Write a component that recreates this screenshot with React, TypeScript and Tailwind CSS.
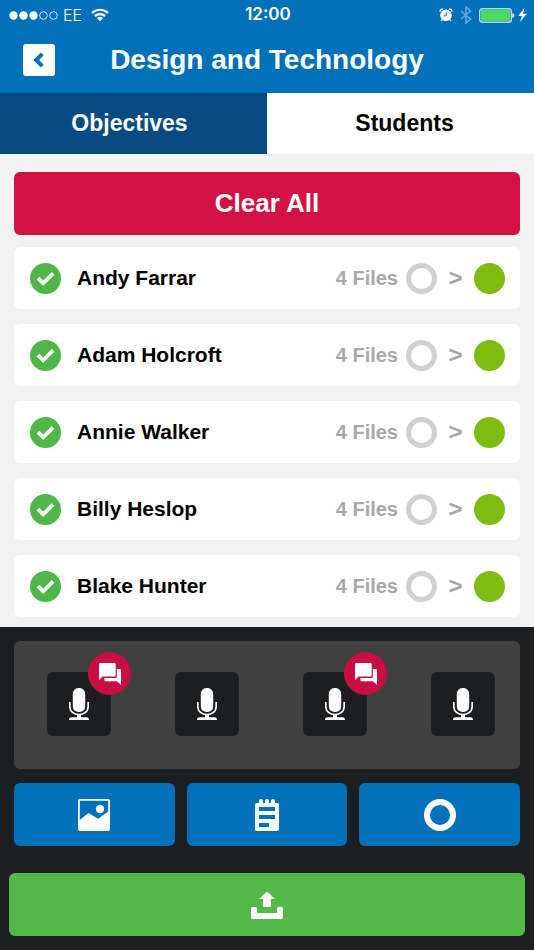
import { useState } from "react";

const STUDENTS = [
  { name: "Andy Farrar", files: 4 },
  { name: "Adam Holcroft", files: 4 },
  { name: "Annie Walker", files: 4 },
  { name: "Billy Heslop", files: 4 },
  { name: "Blake Hunter", files: 4 },
];

const RECORDINGS = [
  { id: 1, hasComments: true },
  { id: 2, hasComments: false },
  { id: 3, hasComments: true },
  { id: 4, hasComments: false },
];

const TABS = [
  { label: "Objectives", spacing: "pr-2" },
  { label: "Students", spacing: "pl-2" },
];

function SignalDots() {
  return (
    <svg className="w-[49px] h-[9px]" viewBox="0 0 49 9" aria-hidden="true">
      <circle cx="4.5" cy="4.5" r="4.2" fill="#fff" />
      <circle cx="14.5" cy="4.5" r="4.2" fill="#fff" />
      <circle cx="24.5" cy="4.5" r="4.2" fill="#fff" />
      <circle cx="34.5" cy="4.5" r="3.8" fill="none" stroke="#fff" strokeWidth="0.8" />
      <circle cx="44.5" cy="4.5" r="3.8" fill="none" stroke="#fff" strokeWidth="0.8" />
    </svg>
  );
}

function WifiIcon() {
  return (
    <svg className="w-[18px] h-[14px]" viewBox="0 0 18 14" fill="none" stroke="#fff" aria-hidden="true">
      <path d="M1 5 A11.5 11.5 0 0 1 17 5" strokeWidth="2.2" />
      <path d="M3.9 8.1 A7.4 7.4 0 0 1 14.1 8.1" strokeWidth="2.2" />
      <path d="M9 13.2 L5.9 10.1 A4.4 4.4 0 0 1 12.1 10.1 Z" fill="#fff" stroke="none" />
    </svg>
  );
}

function AlarmIcon() {
  return (
    <svg className="w-[14px] h-[14px]" viewBox="0 0 14 14" aria-hidden="true">
      <circle cx="7" cy="7.3" r="5.8" fill="#fff" />
      <path d="M0.9 3.6 A3 3 0 0 1 3.8 1 M13.1 3.6 A3 3 0 0 0 10.2 1" stroke="#fff" strokeWidth="1.3" fill="none" />
      <path d="M3 11.5 L2.1 13 M11 11.5 L11.9 13" stroke="#fff" strokeWidth="1.2" />
      <path d="M7.3 4 V7.8 H4.4" stroke="#0070ba" strokeWidth="1" fill="none" />
    </svg>
  );
}

function BluetoothIcon() {
  return (
    <svg className="w-[12px] h-[18px]" viewBox="0 0 12 18" fill="none" stroke="#62a9dc" strokeWidth="1.6" aria-hidden="true">
      <path d="M1 5 L10.5 13 L6 17 V1 L10.5 5 L1 13" />
    </svg>
  );
}

function BatteryIcon() {
  return (
    <svg className="w-[36px] h-[15px]" viewBox="0 0 36 15" aria-hidden="true">
      <rect x="0.7" y="0.7" width="31.6" height="13.6" rx="2.5" fill="none" stroke="#b5d5ee" strokeWidth="1.4" />
      <rect x="1.8" y="1.8" width="29.4" height="11.4" rx="1" fill="#4cd964" />
      <path d="M33.3 5 C36 5.6 36 9.4 33.3 10 Z" fill="#e4f0f9" />
    </svg>
  );
}

function BoltIcon() {
  return (
    <svg className="w-[9px] h-[14px]" viewBox="0 0 9 14" fill="#fff" aria-hidden="true">
      <path d="M6.4 0 L0.2 7.9 H3.8 L2 14 L8.9 5.8 H5.1 Z" />
    </svg>
  );
}

function MicIcon() {
  return (
    <svg className="w-[20px] h-[32px]" viewBox="0 0 20 32" aria-hidden="true">
      <rect x="3.8" y="0" width="12.4" height="24" rx="5.6" fill="#fff" />
      <path d="M0.8 14 V18.4 C0.8 23.6 5 26.5 10 26.5 C15 26.5 19.2 23.6 19.2 18.4 V14" fill="none" stroke="#fff" strokeWidth="1.7" />
      <path d="M8 26.5 H12 V29.3 H17.5 C19.2 29.3 20 30.2 20 32 H0 C0 30.2 0.8 29.3 2.5 29.3 H8 Z" fill="#fff" />
    </svg>
  );
}

function CommentsIcon() {
  return (
    <svg className="w-[22px] h-[22px]" viewBox="0 0 22 22" fill="#fff" aria-hidden="true">
      <path d="M1 0 H15.7 Q16.7 0 16.7 1 V12.6 Q16.7 13.6 15.7 13.6 H3.6 L0 17.2 V1 Q0 0 1 0 Z" />
      <path d="M17.9 6 H21 Q22 6 22 7 V22 L18 18.3 H6.4 Q5.4 18.3 5.4 17.3 V14.9 H16.9 Q17.9 14.9 17.9 13.9 Z" />
    </svg>
  );
}

function PictureIcon() {
  return (
    <svg className="w-8 h-8" viewBox="0 0 32 32" aria-hidden="true">
      <rect x="0.9" y="0.9" width="30.2" height="30.2" rx="1" fill="none" stroke="#fff" strokeWidth="1.8" />
      <circle cx="22" cy="10" r="4.2" fill="#fff" />
      <path d="M1 21.5 L10.5 14 L20 19.8 L31 12 V31 H1 Z" fill="#fff" />
    </svg>
  );
}

function NotesIcon() {
  return (
    <svg className="w-6 h-8" viewBox="0 0 24 32" aria-hidden="true">
      <rect x="0" y="4" width="24" height="28" rx="1.8" fill="#fff" />
      <path d="M6 6 V2 M12 6 V2 M18 6 V2" stroke="#fff" strokeWidth="4" strokeLinecap="round" />
      <path d="M4 10 H20 M4 18 H20 M4 26 H14" stroke="#0070ba" strokeWidth="3.8" />
    </svg>
  );
}

function UploadIcon() {
  return (
    <svg className="w-8 h-7" viewBox="0 0 32 28" fill="#fff" aria-hidden="true">
      <path d="M16 0.5 L24 8 H20 V16 H12 V8 H8 Z" />
      <path d="M1.5 16 H4.5 Q6 16 6 17.5 V22 H26 V17.5 Q26 16 27.5 16 H30.5 Q32 16 32 17.5 V26.5 Q32 28 30.5 28 H1.5 Q0 28 0 26.5 V17.5 Q0 16 1.5 16 Z" />
    </svg>
  );
}

function StudentRow({ name, files }: { name: string; files: number }) {
  const [checked, setChecked] = useState(true);

  return (
    <li className="h-[62px] pl-4 pr-[15px] flex items-center justify-between bg-white rounded-md">
      <label className="flex items-center gap-4 text-[21px] text-black cursor-pointer">
        <span className="relative flex">
          <input
            type="checkbox"
            checked={checked}
            onChange={() => setChecked(!checked)}
            className="peer appearance-none w-[31px] h-[31px] rounded-full bg-[#d1d1d1] checked:bg-[#4fb748]"
          />
          <svg
            className="absolute inset-0 w-[31px] h-[31px] pointer-events-none hidden peer-checked:block"
            viewBox="0 0 32 32"
            fill="none"
            stroke="#fff"
            strokeWidth="4"
            aria-hidden="true"
          >
            <path d="M8.2 15.6 L13.6 21 L23.8 10.8" />
          </svg>
        </span>
        {name}
      </label>

      <div className="flex items-center">
        <span className="text-xl text-[#a8a8a8] mr-2">{files} Files</span>
        <span className="w-[31px] h-[31px] rounded-full border-5 border-[#d1d1d1]" />
        <span className="w-[37px] text-center text-2xl text-[#a8a8a8]">&gt;</span>
        <span className="w-[31px] h-[31px] rounded-full bg-[#7fbc11]" />
      </div>
    </li>
  );
}

export default function App() {
  const [activeTab, setActiveTab] = useState("Objectives");

  return (
    <div className="min-h-screen flex flex-col bg-[#f2f2f2] font-['Liberation_Sans',Arial,sans-serif] font-bold">
      <header className="h-[93px] bg-[#0070ba] text-white">
        {/* Status bar */}
        <div className="h-[30px] pl-[9px] pr-[7px] grid grid-cols-[1fr_auto_1fr] items-center font-['Inter',sans-serif]">
          <div className="flex items-center gap-[5px] text-base font-light">
            <SignalDots />
            <span>EE</span>
            <span className="ml-1">
              <WifiIcon />
            </span>
          </div>
          <span className="text-[17px] font-semibold">12:00</span>
          <div className="flex items-center justify-end gap-[7px]">
            <AlarmIcon />
            <BluetoothIcon />
            <div className="flex items-center gap-[3px]">
              <BatteryIcon />
              <BoltIcon />
            </div>
          </div>
        </div>

        {/* Title bar */}
        <div className="h-[60px] px-[23px] grid grid-cols-[32px_1fr_32px] items-center">
          <button aria-label="Back" className="w-8 h-8 rounded-[3px] bg-white flex items-center justify-center">
            <svg className="w-[10px] h-[16px]" viewBox="0 0 10 16" fill="none" stroke="#0070ba" strokeWidth="4" aria-hidden="true">
              <path d="M8.3 1.9 L2.2 8 L8.3 14.1" />
            </svg>
          </button>
          <h1 className="text-[28px] text-center">Design and Technology</h1>
        </div>
      </header>

      <div role="tablist" className="grid grid-cols-2">
        {TABS.map(({ label, spacing }) => (
          <button
            key={label}
            role="tab"
            aria-selected={activeTab === label}
            onClick={() => setActiveTab(label)}
            className={`h-[61px] text-[23px] ${spacing} ${
              activeTab === label ? "bg-[#084b82] text-white" : "bg-white text-black"
            }`}
          >
            {label}
          </button>
        ))}
      </div>

      <main className="flex-1 px-[14px] pt-[18px] pb-[10px]">
        <button className="w-full h-[63px] rounded-md bg-[#d21245] text-white text-[26px]">Clear All</button>
        <ul className="mt-3 flex flex-col gap-[15px]">
          {STUDENTS.map((student) => (
            <StudentRow key={student.name} name={student.name} files={student.files} />
          ))}
        </ul>
      </main>

      <footer className="bg-[#1c1f22] px-[9px] py-[14px]">
        <div className="px-[5px]">
          {/* Recordings */}
          <div className="pl-[33px] pr-[25px] pt-[31px] pb-[33px] flex items-center justify-between rounded-md bg-[#404040]">
            {RECORDINGS.map(({ id, hasComments }) => (
              <button
                key={id}
                aria-label={`Recording ${id}`}
                className="relative w-16 h-16 rounded-md bg-[#1c1f22] flex items-center justify-center"
              >
                <MicIcon />
                {hasComments && (
                  <span className="absolute -top-5 -right-5 w-[43px] h-[43px] rounded-full bg-[#c90f42] flex items-center justify-center">
                    <CommentsIcon />
                  </span>
                )}
              </button>
            ))}
          </div>

          {/* Attachments */}
          <div className="mt-[14px] grid grid-cols-3 gap-3">
            <button aria-label="Add picture" className="h-[63px] rounded-md bg-[#0070ba] flex items-center justify-center">
              <PictureIcon />
            </button>
            <button aria-label="Add note" className="h-[63px] rounded-md bg-[#0070ba] flex items-center justify-center">
              <NotesIcon />
            </button>
            <button aria-label="Set level" className="h-[63px] rounded-md bg-[#0070ba] flex items-center justify-center">
              <span className="w-8 h-8 rounded-full border-6 border-white" />
            </button>
          </div>
        </div>

        <button aria-label="Upload" className="mt-[27px] w-full h-[63px] rounded-md bg-[#55b748] flex items-center justify-center">
          <UploadIcon />
        </button>
      </footer>
    </div>
  );
}
